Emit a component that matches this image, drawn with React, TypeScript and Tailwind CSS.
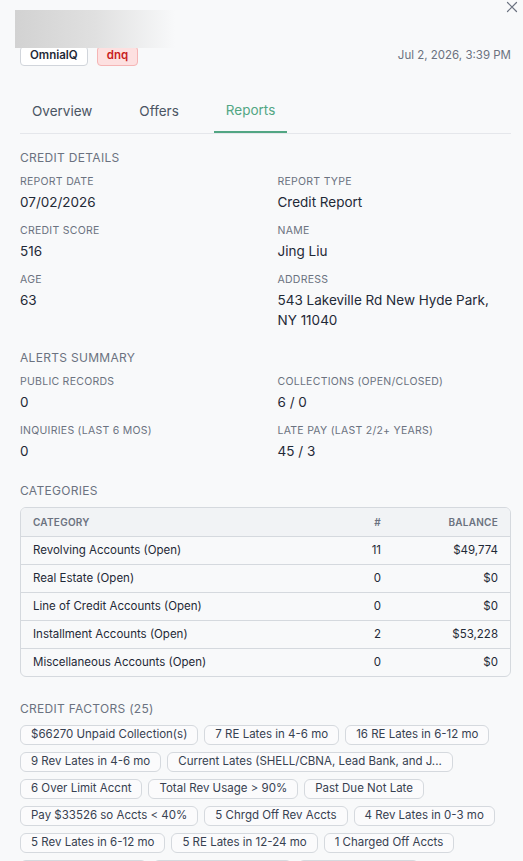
import React from "react";

type Field = { label: string; value: React.ReactNode };

const creditDetails: Field[] = [
  { label: "Report Date", value: "07/02/2026" },
  { label: "Report Type", value: "Credit Report" },
  { label: "Credit Score", value: "516" },
  { label: "Name", value: "Jing Liu" },
  { label: "Age", value: "63" },
  { label: "Address", value: "543 Lakeville Rd New Hyde Park, NY 11040" },
];

const alerts: Field[] = [
  { label: "Public Records", value: "0" },
  { label: "Collections (Open/Closed)", value: "6 / 0" },
  { label: "Inquiries (Last 6 mos)", value: "0" },
  { label: "Late Pay (Last 2/2+ Years)", value: "45 / 3" },
];

const categories = [
  { name: "Revolving Accounts (Open)", count: 11, balance: "$49,774" },
  { name: "Real Estate (Open)", count: 0, balance: "$0" },
  { name: "Line of Credit Accounts (Open)", count: 0, balance: "$0" },
  { name: "Installment Accounts (Open)", count: 2, balance: "$53,228" },
  { name: "Miscellaneous Accounts (Open)", count: 0, balance: "$0" },
];

const factors = [
  "$66270 Unpaid Collection(s)",
  "7 RE Lates in 4-6 mo",
  "16 RE Lates in 6-12 mo",
  "9 Rev Lates in 4-6 mo",
  "Current Lates (SHELL/CBNA, Lead Bank, and J...",
  "6 Over Limit Accnt",
  "Total Rev Usage > 90%",
  "Past Due Not Late",
  "Pay $33526 so Accts < 40%",
  "5 Chrgd Off Rev Accts",
  "4 Rev Lates in 0-3 mo",
  "5 Rev Lates in 6-12 mo",
  "5 RE Lates in 12-24 mo",
  "1 Charged Off Accts",
  "4 Collections Accts",
  "1 Inst Lates in 4-6 mo",
  "No Mortgage Acct",
  "3 Rev Lates in 12-24 mo",
  "2 Inst Lates in 6-12 mo",
  "Thin Revolving History",
  "1 Repossession",
  "High Util on 8 Accts",
  "3 Accts Opened < 12 mo",
  "2 RE Lates in 0-3 mo",
  "Short Credit History",
];

function SectionTitle({ children }: { children: React.ReactNode }) {
  return (
    <div className="text-[12px] leading-4 uppercase tracking-wide text-[#6b7280]">
      {children}
    </div>
  );
}

function FieldGrid({ fields }: { fields: Field[] }) {
  return (
    <div className="mt-2 grid grid-cols-2 gap-x-6 gap-y-[11px]">
      {fields.map((f) => (
        <div key={f.label}>
          <div className="text-[10.5px] leading-4 uppercase tracking-wide text-[#6b7280]">
            {f.label}
          </div>
          <div className="mt-0.5 text-[13.5px] leading-5 text-[#1f2937]">{f.value}</div>
        </div>
      ))}
    </div>
  );
}

function CloseIcon() {
  return (
    <svg width="12" height="12" viewBox="0 0 12 12" fill="none" stroke="#6b7280" strokeWidth="1.2" strokeLinecap="round">
      <path d="M1.5 1.5 L10.5 10.5 M10.5 1.5 L1.5 10.5" />
    </svg>
  );
}

export default function App() {
  return (
    <div
      className="relative min-h-screen w-[523px] overflow-hidden bg-[#f8f9fa] pl-5 pr-3"
      style={{ fontFamily: "Inter, 'Noto Sans', sans-serif" }}
    >
      {/* close button */}
      <button className="absolute right-[5px] top-[1px] p-0">
        <CloseIcon />
      </button>

      {/* redacted title */}
      <div className="absolute left-[15px] top-[10px] z-10 h-[38px] w-[160px] bg-gradient-to-r from-[#d2d2d2] via-[#e0e0e0] to-[#f8f9fa]" />

      {/* source badges and timestamp */}
      <div className="flex items-center justify-between pt-[46px]">
        <div className="flex items-center gap-[9px]">
          <span className="flex h-5 items-center rounded border border-[#d1d5db] bg-white px-[9px] text-[11.5px] font-semibold text-[#1f2937]">
            OmnialQ
          </span>
          <span className="flex h-5 items-center rounded border border-[#f5b5b5] bg-[#fde0e0] px-[9px] text-[11.5px] font-semibold text-[#c81e1e]">
            dnq
          </span>
        </div>
        <span className="text-[11.5px] text-[#6b7280]">Jul 2, 2026, 3:39 PM</span>
      </div>

      {/* tabs */}
      <div className="mt-[23px] flex gap-[23px] border-b border-[#e5e7eb]">
        <button className="flex h-[44px] items-center px-3 text-[13.5px] text-[#4b5563]">Overview</button>
        <button className="flex h-[44px] items-center px-3 text-[13.5px] text-[#4b5563]">Offers</button>
        <button className="-mb-px flex h-[44px] items-center border-b-2 border-[#52a683] px-3 text-[13.5px] text-[#52a683]">
          Reports
        </button>
      </div>

      <div className="mt-4">
        <SectionTitle>Credit Details</SectionTitle>
        <FieldGrid fields={creditDetails} />
      </div>

      <div className="mt-5">
        <SectionTitle>Alerts Summary</SectionTitle>
        <FieldGrid fields={alerts} />
      </div>

      <div className="mt-[22px]">
        <SectionTitle>Categories</SectionTitle>
        <div className="mt-2 overflow-hidden rounded-md border border-[#d5d9de]">
          <div className="grid h-[28px] grid-cols-[1fr_80px_117px] items-center bg-[#f1f3f5] text-[10px] font-semibold uppercase tracking-wide text-[#6b7280]">
            <div className="px-3">Category</div>
            <div className="px-3 text-right">#</div>
            <div className="px-3 text-right">Balance</div>
          </div>
          {categories.map((c) => (
            <div
              key={c.name}
              className="grid h-[28px] grid-cols-[1fr_80px_117px] items-center border-t border-[#d5d9de] text-[11.5px] text-[#1f2937]"
            >
              <div className="px-3">{c.name}</div>
              <div className="px-3 text-right">{c.count}</div>
              <div className="px-3 text-right">{c.balance}</div>
            </div>
          ))}
        </div>
      </div>

      <div className="mt-6">
        <SectionTitle>Credit Factors (25)</SectionTitle>
        <div className="mt-2 flex flex-wrap gap-x-1.5 gap-y-[7px]">
          {factors.map((f) => (
            <span
              key={f}
              className="flex h-5 max-w-[288px] items-center whitespace-nowrap rounded-md border border-[#d5d9de] bg-[#fbfbfc] px-2.5 text-[11.5px] text-[#374151]"
            >
              {f}
            </span>
          ))}
        </div>
      </div>
      <div className="h-10" />
    </div>
  );
}
